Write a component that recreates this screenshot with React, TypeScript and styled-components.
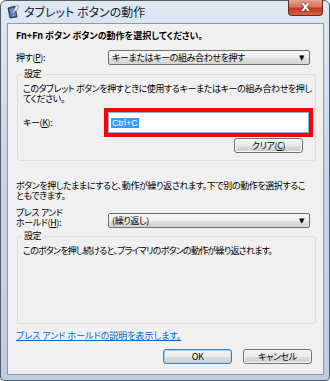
import styled, { createGlobalStyle } from 'styled-components';

const GlobalStyle = createGlobalStyle`
  html, body {
    margin: 0;
    padding: 0;
    background: #ffffff;
  }
  body {
    font-family: "Noto Sans CJK JP", "Liberation Sans", sans-serif;
    font-feature-settings: "palt";
    color: #000;
  }
`;

const Window = styled.div`
  width: 330px;
  height: 381px;
  box-sizing: border-box;
  border: 1px solid #4f5d6c;
  border-radius: 6px 6px 4px 4px;
  background: linear-gradient(180deg, #dfe8f1 0%, #c9d8e7 40%, #bccde0 100%);
  display: flex;
  flex-direction: column;
  padding: 0 5px 5px 6px;
`;

const TitleBar = styled.div`
  height: 22px;
  display: flex;
  align-items: flex-start;
  gap: 5px;
`;

const TitleIcon = styled.svg`
  margin-top: 4px;
  flex: none;
`;

const TitleText = styled.span`
  font-size: 12px;
  line-height: 13px;
  margin-top: 4px;
  color: #14243a;
`;

const CloseButton = styled.div`
  margin-left: auto;
  margin-top: -1px;
  margin-right: 1px;
  width: 35px;
  height: 16px;
  box-sizing: border-box;
  border: 1px solid #6e2a1e;
  border-top: none;
  border-radius: 0 0 4px 4px;
  background: linear-gradient(180deg, #e7a493 0%, #d9735c 45%, #c2381f 55%, #d6654a 100%);
  display: flex;
  align-items: center;
  justify-content: center;
  color: #fff;
  font-family: "DejaVu Sans", sans-serif;
  font-weight: bold;
  font-size: 11px;
  text-shadow: 0 0 2px #5a1a10, 0 0 1px #5a1a10;
`;

const Client = styled.div`
  flex: 1;
  background: #f0f0f0;
  border: 1px solid #8a9bae;
  padding: 6px 7px 0 8px;
  display: flex;
  flex-direction: column;
  font-size: 9px;
  line-height: 10px;
  letter-spacing: -0.4px;
  white-space: nowrap;
`;

const Heading = styled.div`
  font-weight: bold;
  font-size: 9px;
  line-height: 12px;
  letter-spacing: 0;
`;

const FieldRow = styled.div<{ $top: number; $align?: string }>`
  display: flex;
  align-items: ${(p) => p.$align || 'center'};
  margin-top: ${(p) => p.$top}px;
`;

const Label = styled.div<{ $width: number }>`
  width: ${(p) => p.$width}px;
  flex: none;
  line-height: 10px;
`;

const Select = styled.div`
  width: 202px;
  height: 15px;
  box-sizing: border-box;
  border: 1px solid #707070;
  border-radius: 2px;
  background: linear-gradient(180deg, #f6f6f6 0%, #eeeeee 50%, #e0e0e0 51%, #d4d4d4 100%);
  display: flex;
  align-items: center;
  padding: 0 5px 0 3px;
  line-height: 10px;
`;

const Arrow = styled.span`
  margin-left: auto;
  font-size: 7px;
  font-family: "DejaVu Sans", sans-serif;
`;

const Group = styled.div<{ $top: number; $minHeight?: number }>`
  position: relative;
  margin-top: ${(p) => p.$top}px;
  margin-left: 1px;
  border: 1px solid #d5dfe5;
  border-radius: 3px;
  padding: 9px 2px 7px 5px;
  min-height: ${(p) => p.$minHeight || 0}px;
  box-sizing: border-box;
`;

const Legend = styled.span`
  position: absolute;
  top: -6px;
  left: 4px;
  padding: 0 2px;
  background: #f0f0f0;
  line-height: 10px;
`;

const Para = styled.div<{ $top?: number; $tight?: boolean }>`
  margin-top: ${(p) => p.$top || 0}px;
  letter-spacing: ${(p) => (p.$tight ? '-0.75px' : 'inherit')};
`;

const Highlight = styled.div`
  width: 210px;
  height: 29px;
  box-sizing: border-box;
  border: 4px solid #ff0000;
`;

const TextBox = styled.div`
  height: 100%;
  box-sizing: border-box;
  border: 1px solid #8fb0d2;
  background: #fff;
  display: flex;
  align-items: center;
  padding-left: 2px;
`;

const Selected = styled.span`
  background: #3399ff;
  color: #fff;
  font-family: "Liberation Sans", sans-serif;
  font-size: 9px;
  line-height: 10px;
  letter-spacing: 0;
  padding: 0 1px;
`;

const ButtonRow = styled.div<{ $top: number; $right: number }>`
  display: flex;
  justify-content: flex-end;
  gap: 11px;
  margin-top: ${(p) => p.$top}px;
  margin-right: ${(p) => p.$right}px;
`;

const Button = styled.div<{ $default?: boolean }>`
  width: 69px;
  height: 15px;
  box-sizing: border-box;
  border: 1px solid ${(p) => (p.$default ? '#3c7fb1' : '#707070')};
  border-radius: 3px;
  background: linear-gradient(180deg, #f2f2f2 0%, #ebebeb 50%, #dddddd 51%, #cfcfcf 100%);
  box-shadow: ${(p) => (p.$default ? 'inset 0 0 0 1px #a6d6f4' : 'inset 0 0 0 1px #fbfbfb')};
  display: flex;
  align-items: center;
  justify-content: center;
  line-height: 10px;
`;

const Link = styled.a`
  color: #0066cc;
  text-decoration: underline;
  margin-top: 7px;
  line-height: 10px;
  letter-spacing: 0;
  align-self: flex-start;
`;

export default function App() {
  return (
    <>
      <GlobalStyle />
      <Window>
        <TitleBar>
          <TitleIcon width="12" height="14" viewBox="0 0 12 14">
            <path d="M1 3 L8 1 L10 12 L3 13 Z" fill="#2d4d86" stroke="#1b2f55" strokeWidth="0.8" />
            <path d="M2.5 4 L7.5 2.6 L9 11 L4 11.8 Z" fill="#6c8fc9" />
            <path d="M9 0.5 L11.5 0 L11 3 L6 9 L5.5 8 Z" fill="#e8eef6" stroke="#50607a" strokeWidth="0.5" />
          </TitleIcon>
          <TitleText>タブレット ボタンの動作</TitleText>
          <CloseButton>X</CloseButton>
        </TitleBar>
        <Client>
          <Heading>Fn+Fn ボタン ボタンの動作を選択してください。</Heading>
          <FieldRow $top={8}>
            <Label $width={92}>押す(<u>P</u>):</Label>
            <Select>
              キーまたはキーの組み合わせを押す
              <Arrow>▼</Arrow>
            </Select>
          </FieldRow>
          <Group $top={9}>
            <Legend>設定</Legend>
            <Para>
              このタブレット ボタンを押すときに使用するキーまたはキーの組み合わせを押し
              <br />
              てください。
            </Para>
            <FieldRow $top={4}>
              <Label $width={81}>キー(<u>K</u>):</Label>
              <Highlight>
                <TextBox>
                  <Selected>Ctrl+C</Selected>
                </TextBox>
              </Highlight>
            </FieldRow>
            <ButtonRow $top={1} $right={10}>
              <Button>クリア(<u>C</u>)</Button>
            </ButtonRow>
          </Group>
          <Para $top={20}>
            ボタンを押したままにすると、動作が繰り返されます。下で別の動作を選択するこ
            <br />
            ともできます。
          </Para>
          <FieldRow $top={7} $align="flex-end">
            <Label $width={92}>
              プレス アンド
              <br />
              ホールド(<u>H</u>):
            </Label>
            <Select>
              (繰り返し)
              <Arrow>▼</Arrow>
            </Select>
          </FieldRow>
          <Group $top={8} $minHeight={88}>
            <Legend>設定</Legend>
            <Para $tight>このボタンを押し続けると、プライマリのボタンの動作が繰り返されます。</Para>
          </Group>
          <Link href="#">プレス アンド ホールドの説明を表示します。</Link>
          <ButtonRow $top={8} $right={4}>
            <Button $default>OK</Button>
            <Button>キャンセル</Button>
          </ButtonRow>
        </Client>
      </Window>
    </>
  );
}
